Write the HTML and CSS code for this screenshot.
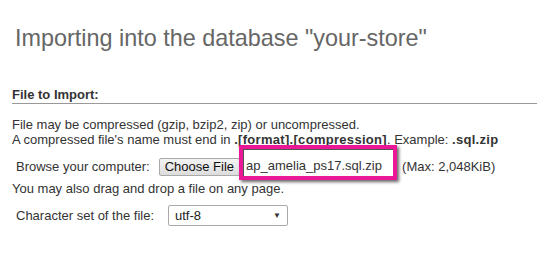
FILE: index.html
```html
<!DOCTYPE html>
<html>
<head>
<meta charset="utf-8">
<link rel="stylesheet" href="styles.css">
</head>
<body>
<h2 class="title">Importing into the database "your-store"</h2>
<section class="import">
  <h3 class="legend">File to Import:</h3>
  <p class="info">File may be compressed (gzip, bzip2, zip) or uncompressed.<br>A compressed file's name must end in <b>.[format].[compression]</b>. Example: <b>.sql.zip</b></p>
  <div class="row browse">
    <span class="label">Browse your computer:</span>
    <span class="filebtn">Choose File</span>
    <span class="highlight"><span class="fname">ap_amelia_ps17.sql.zip</span></span>
    <span class="max">(Max: 2,048KiB)</span>
  </div>
  <p class="drag">You may also drag and drop a file on any page.</p>
  <div class="row charset">
    <span class="label">Character set of the file:</span>
    <span class="select"><span>utf-8</span><span class="arrow">▼</span></span>
  </div>
</section>
</body>
</html>
```
FILE: styles.css
```css
html, body {
  margin: 0;
  padding: 0;
  background: #fff;
}
body {
  font-family: "Liberation Sans", Arial, sans-serif;
  font-size: 13px;
  color: #333;
  width: 537px;
  height: 257px;
  overflow: hidden;
}
.title {
  margin: 0;
  padding: 25px 0 0 15px;
  font-size: 23.4px;
  font-weight: normal;
  line-height: 26px;
  color: #666;
}
.import {
  margin: 0 0 0 12px;
  padding-top: 36px;
}
.legend {
  margin: 0;
  font-size: 13px;
  font-weight: bold;
  line-height: 15px;
  padding-bottom: 1px;
  border-bottom: 1px solid #999;
  color: #333;
}
.info {
  margin: 13px 0 0 0;
  line-height: 15px;
}
.info b {
  font-weight: bold;
  letter-spacing: 0.3px;
}
.row {
  display: flex;
  align-items: center;
}
.browse {
  margin-top: 2px;
  height: 35px;
  padding-left: 4px;
}
.label {
  margin-right: 9px;
}
.filebtn {
  box-sizing: border-box;
  height: 18px;
  line-height: 16px;
  padding: 0 5px;
  border: 1px solid #a9a9a9;
  border-radius: 2px;
  background: linear-gradient(#f4f4f4, #dcdcdc);
  color: #111;
  font-size: 13px;
}
.highlight {
  box-sizing: border-box;
  width: 158px;
  height: 35px;
  margin-top: -8px;
  margin-left: -1px;
  border: 4px solid #ea1796;
  box-shadow: inset 1px 1px 0 #555, 2px 2px 3px rgba(0,0,0,0.6);
  display: flex;
  align-items: center;
  padding-left: 3px;
  padding-top: 6px;
  background: #fff;
}
.fname {
  color: #333;
}
.max {
  margin-left: 5px;
}
.drag {
  margin: -3px 0 0 0;
  line-height: 15px;
}
.charset {
  margin-top: 9px;
  padding-left: 4px;
}
.select {
  box-sizing: border-box;
  width: 120px;
  height: 21px;
  border: 1px solid #aaa;
  border-radius: 2px;
  display: flex;
  align-items: center;
  justify-content: space-between;
  padding: 0 6px 0 6px;
  color: #222;
  margin-left: 5px;
}
.arrow {
  font-size: 8px;
  color: #333;
}
```
